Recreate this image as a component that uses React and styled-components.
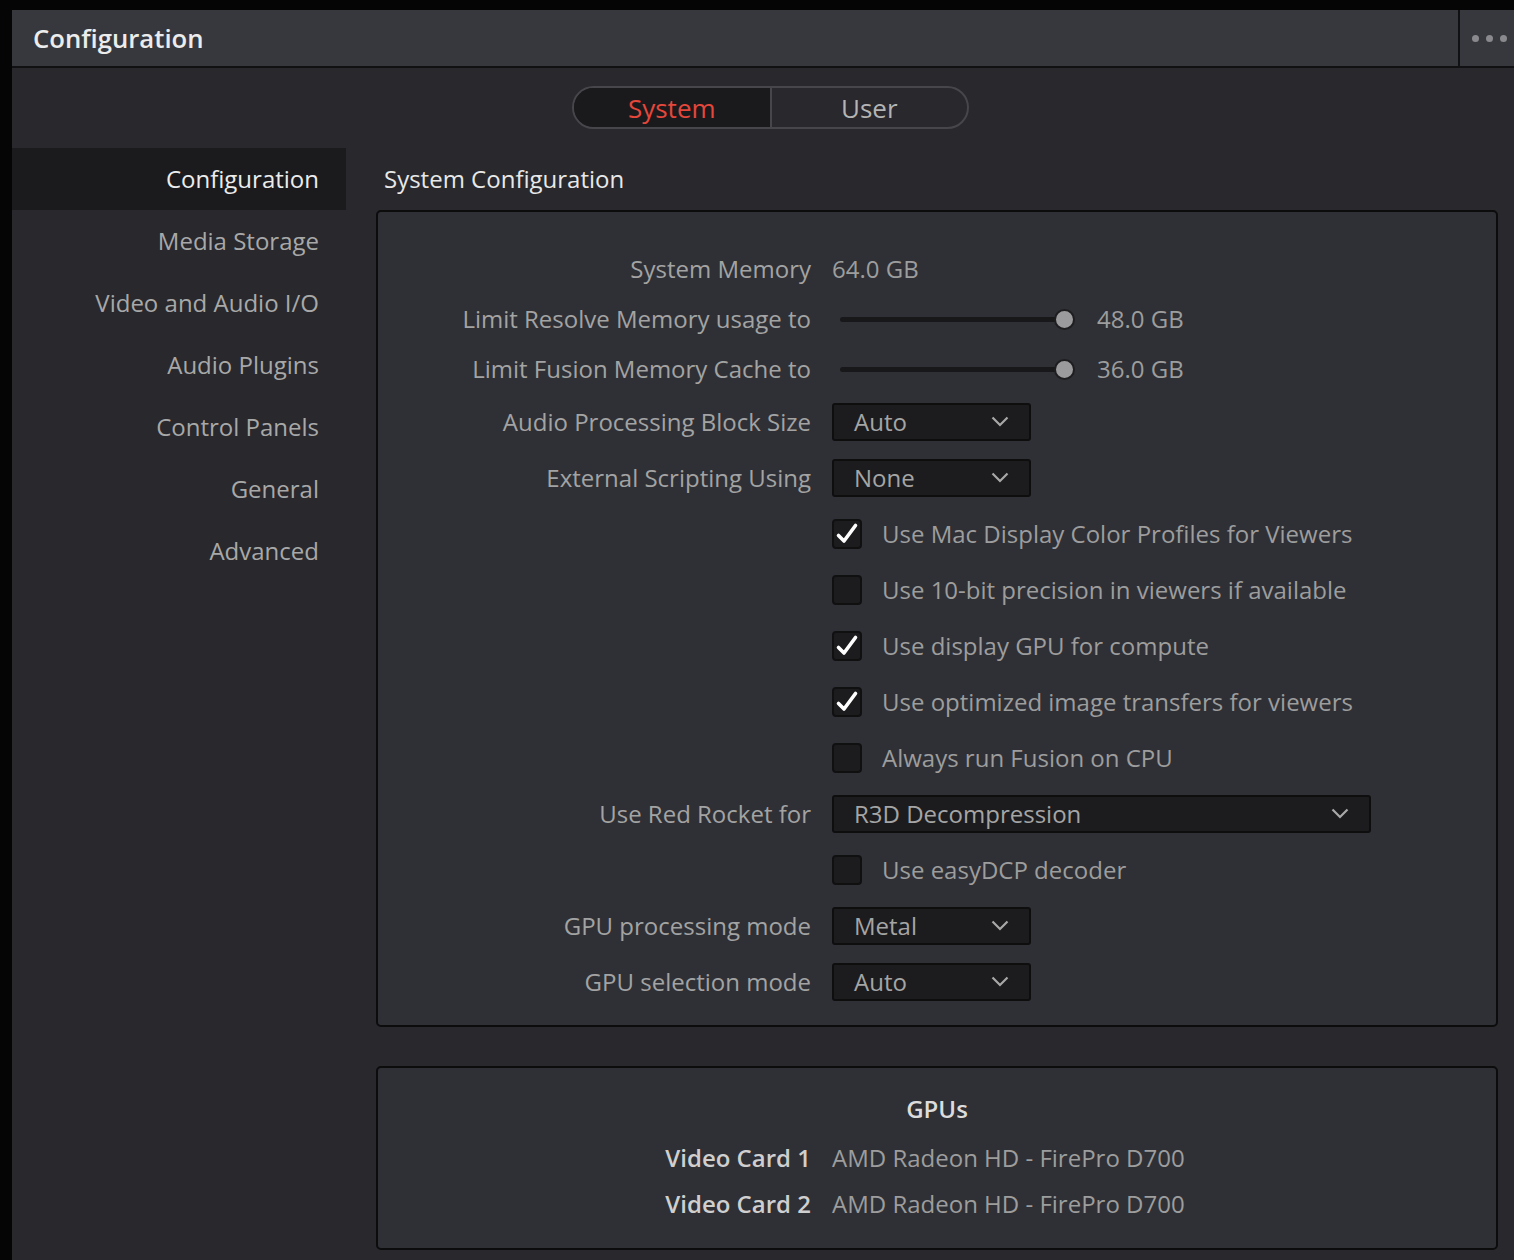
import React from "react";
import styled, { createGlobalStyle } from "styled-components";

const Global = createGlobalStyle`
  html, body { margin: 0; padding: 0; background: #050505; }
  body { font-family: "Open Sans", "Noto Sans", sans-serif; }
  * { box-sizing: border-box; }
`;

const Frame = styled.div`
  padding: 10px 0 0 12px;
  width: 1514px;
  height: 1260px;
  overflow: hidden;
`;

const Window = styled.div`
  background: #28282d;
  height: 1250px;
  display: flex;
  flex-direction: column;
`;

const Header = styled.div`
  height: 58px;
  display: flex;
  background: #37383d;
  border-bottom: 2px solid #111113;
`;

const Title = styled.div`
  flex: 1;
  padding-left: 21px;
  display: flex;
  align-items: center;
  font-size: 25.7px;
  font-weight: 600;
  color: #ececec;
`;

const MenuBtn = styled.div`
  width: 56px;
  border-left: 2px solid #111113;
  display: flex;
  align-items: center;
  justify-content: center;
  gap: 7px;
  padding-left: 4px;
`;

const Dot = styled.span`
  width: 7px;
  height: 7px;
  border-radius: 50%;
  background: #8a8a8e;
`;

const Body = styled.div`
  flex: 1;
  display: flex;
  flex-direction: column;
  padding-top: 18px;
`;

const Toggle = styled.div`
  align-self: flex-start;
  margin-left: 560px;
  display: flex;
  height: 43px;
  width: 397px;
  border: 2px solid #46464b;
  border-radius: 22px;
  overflow: hidden;
`;

const ToggleItem = styled.div`
  flex: 1;
  display: flex;
  align-items: center;
  justify-content: center;
  font-size: 26px;
  color: ${(p) => (p.$active ? "#e5473b" : "#b4b4b4")};
  background: ${(p) => (p.$active ? "#1a1a1c" : "transparent")};
  & + & { border-left: 2px solid #46464b; }
`;

const Main = styled.div`
  display: flex;
  margin-top: 19px;
`;

const Sidebar = styled.div`
  width: 334px;
  display: flex;
  flex-direction: column;
`;

const NavItem = styled.div`
  height: 62px;
  display: flex;
  align-items: center;
  justify-content: flex-end;
  padding-right: 27px;
  padding-bottom: 2px;
  font-size: 24px;
  color: ${(p) => (p.$active ? "#ececec" : "#a8a8a8")};
  background: ${(p) => (p.$active ? "#1b1b1d" : "transparent")};
`;

const Content = styled.div`
  margin-left: 30px;
  width: 1122px;
  display: flex;
  flex-direction: column;
`;

const SectionTitle = styled.div`
  height: 62px;
  display: flex;
  align-items: center;
  padding-left: 8px;
  padding-bottom: 2px;
  font-size: 24px;
  color: #e8e8e8;
`;

const Panel = styled.div`
  background: #2f3035;
  border: 2px solid #0c0c0d;
  border-radius: 5px;
  padding: ${(p) => p.$pad};
  margin-bottom: ${(p) => p.$mb || "0"};
`;

const Row = styled.div`
  display: grid;
  grid-template-columns: 433px 1fr;
  column-gap: 21px;
  align-items: center;
  height: ${(p) => p.$h}px;
`;

const Label = styled.div`
  text-align: right;
  font-size: 24px;
  color: ${(p) => (p.$strong ? "#cfcfcf" : "#a3a3a3")};
  font-weight: ${(p) => (p.$strong ? 600 : 400)};
  white-space: nowrap;
  margin-top: -2px;
`;

const Value = styled.div`
  font-size: 24px;
  color: #9d9d9d;
  white-space: nowrap;
  display: flex;
  align-items: center;
  margin-top: -2px;
`;

const SliderWrap = styled.div`
  display: flex;
  align-items: center;
`;

const Track = styled.div`
  position: relative;
  width: 225px;
  height: 5px;
  margin-left: 8px;
  border-radius: 3px;
  background: #18181a;
`;

const Thumb = styled.span`
  position: absolute;
  right: -10px;
  top: 50%;
  width: 21px;
  height: 21px;
  margin-top: -10.5px;
  border-radius: 50%;
  background: #9b9b9d;
  border: 2px solid #1e1e20;
`;

const SliderValue = styled.span`
  margin-left: 32px;
  margin-top: -2px;
  font-size: 24px;
  color: #9d9d9d;
`;

const Select = styled.div`
  width: ${(p) => p.$w}px;
  height: 38px;
  background: #1c1c1e;
  border: 2px solid #0e0e0f;
  border-radius: 3px;
  display: flex;
  align-items: center;
  justify-content: space-between;
  padding: 0 20px 2px 20px;
  font-size: 24px;
  color: #a5a5a5;
`;

const CheckRow = styled.div`
  display: flex;
  align-items: center;
  gap: 20px;
  font-size: 24px;
  color: #9d9d9d;
  white-space: nowrap;
`;

const CheckText = styled.span`
  margin-top: -2px;
`;

const Box = styled.span`
  width: 30px;
  height: 30px;
  border-radius: 4px;
  background: #1c1c1e;
  border: 2px solid #101011;
  display: flex;
  align-items: center;
  justify-content: center;
`;

const GpuTitle = styled.div`
  text-align: center;
  height: 36px;
  line-height: 34px;
  font-size: 24px;
  font-weight: 600;
  color: #dcdcdc;
  margin-bottom: 7px;
`;

const Chevron = () => (
  <svg width="18" height="11" viewBox="0 0 18 11">
    <polyline points="1.5,1.5 9,9 16.5,1.5" fill="none" stroke="#a8a8a8" strokeWidth="2.2" />
  </svg>
);

const Check = () => (
  <svg width="24" height="24" viewBox="0 0 24 24">
    <path d="M3.5 13.5 L9 19 L20.5 3.5" fill="none" stroke="#ffffff" strokeWidth="3.6" strokeLinecap="round" strokeLinejoin="round" />
  </svg>
);

const Slider = ({ value }) => (
  <SliderWrap>
    <Track>
      <Thumb />
    </Track>
    <SliderValue>{value}</SliderValue>
  </SliderWrap>
);

const Checkbox = ({ checked, children }) => (
  <CheckRow>
    <Box>{checked && <Check />}</Box>
    <CheckText>{children}</CheckText>
  </CheckRow>
);

const Dropdown = ({ w = 199, children }) => (
  <Select $w={w}>
    <span>{children}</span>
    <Chevron />
  </Select>
);

const nav = [
  "Configuration",
  "Media Storage",
  "Video and Audio I/O",
  "Audio Plugins",
  "Control Panels",
  "General",
  "Advanced",
];

export default function App() {
  return (
    <>
      <Global />
      <Frame>
        <Window>
          <Header>
            <Title>Configuration</Title>
            <MenuBtn>
              <Dot />
              <Dot />
              <Dot />
            </MenuBtn>
          </Header>
          <Body>
            <Toggle>
              <ToggleItem $active>System</ToggleItem>
              <ToggleItem>User</ToggleItem>
            </Toggle>
            <Main>
              <Sidebar>
                {nav.map((n, i) => (
                  <NavItem key={n} $active={i === 0}>
                    {n}
                  </NavItem>
                ))}
              </Sidebar>
              <Content>
                <SectionTitle>System Configuration</SectionTitle>
                <Panel $pad="32px 0 15px" $mb="39px">
                  <Row $h={50}>
                    <Label>System Memory</Label>
                    <Value>64.0 GB</Value>
                  </Row>
                  <Row $h={50}>
                    <Label>Limit Resolve Memory usage to</Label>
                    <Slider value="48.0 GB" />
                  </Row>
                  <Row $h={50}>
                    <Label>Limit Fusion Memory Cache to</Label>
                    <Slider value="36.0 GB" />
                  </Row>
                  <Row $h={56}>
                    <Label>Audio Processing Block Size</Label>
                    <div><Dropdown>Auto</Dropdown></div>
                  </Row>
                  <Row $h={56}>
                    <Label>External Scripting Using</Label>
                    <div><Dropdown>None</Dropdown></div>
                  </Row>
                  <Row $h={56}>
                    <Label />
                    <Checkbox checked>Use Mac Display Color Profiles for Viewers</Checkbox>
                  </Row>
                  <Row $h={56}>
                    <Label />
                    <Checkbox>Use 10-bit precision in viewers if available</Checkbox>
                  </Row>
                  <Row $h={56}>
                    <Label />
                    <Checkbox checked>Use display GPU for compute</Checkbox>
                  </Row>
                  <Row $h={56}>
                    <Label />
                    <Checkbox checked>Use optimized image transfers for viewers</Checkbox>
                  </Row>
                  <Row $h={56}>
                    <Label />
                    <Checkbox>Always run Fusion on CPU</Checkbox>
                  </Row>
                  <Row $h={56}>
                    <Label>Use Red Rocket for</Label>
                    <div><Dropdown w={539}>R3D Decompression</Dropdown></div>
                  </Row>
                  <Row $h={56}>
                    <Label />
                    <Checkbox>Use easyDCP decoder</Checkbox>
                  </Row>
                  <Row $h={56}>
                    <Label>GPU processing mode</Label>
                    <div><Dropdown>Metal</Dropdown></div>
                  </Row>
                  <Row $h={56}>
                    <Label>GPU selection mode</Label>
                    <div><Dropdown>Auto</Dropdown></div>
                  </Row>
                </Panel>
                <Panel $pad="24px 0 21px">
                  <GpuTitle>GPUs</GpuTitle>
                  <Row $h={46}>
                    <Label $strong>Video Card 1</Label>
                    <Value>AMD Radeon HD - FirePro D700</Value>
                  </Row>
                  <Row $h={46}>
                    <Label $strong>Video Card 2</Label>
                    <Value>AMD Radeon HD - FirePro D700</Value>
                  </Row>
                </Panel>
              </Content>
            </Main>
          </Body>
        </Window>
      </Frame>
    </>
  );
}
